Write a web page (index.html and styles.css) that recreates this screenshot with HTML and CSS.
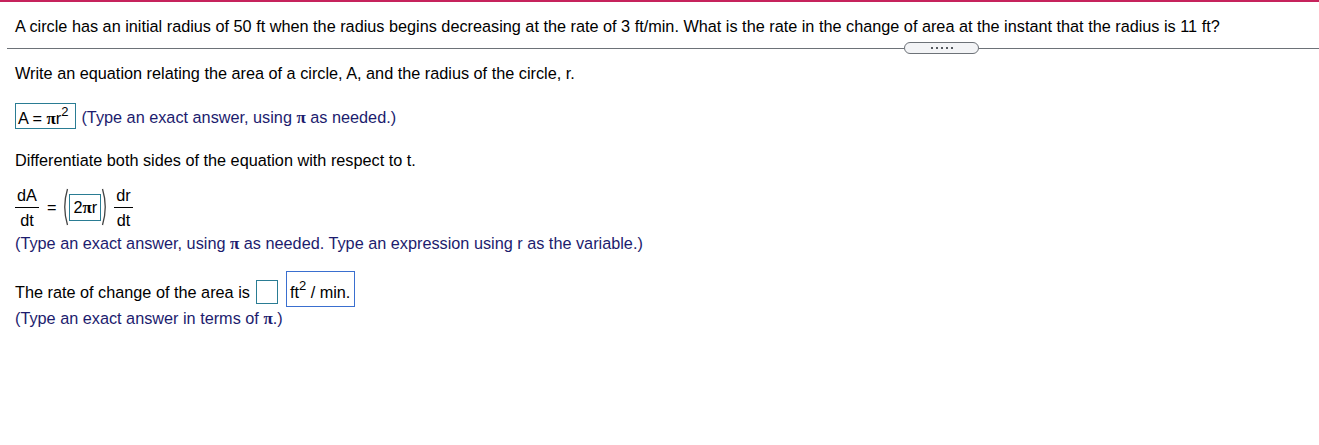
FILE: index.html
```html
<!DOCTYPE html>
<html>
<head>
<meta charset="utf-8">
<link rel="stylesheet" href="styles.css">
</head>
<body>
<div class="topbar"></div>
<div class="question">A circle has an initial radius of 50 ft when the radius begins decreasing at the rate of 3 ft/min. What is the rate in the change of area at the instant that the radius is 11 ft?</div>
<div class="sep">
  <div class="line"></div>
  <div class="pill"><span></span><span></span><span></span><span></span><span></span></div>
  <div class="line short"></div>
</div>
<div class="content">
  <p class="step">Write an equation relating the area of a circle, A, and the radius of the circle, r.</p>
  <div class="row">
    <span class="ans">A = <span class="pi">π</span>r<sup>2</sup></span>
    <span class="hint">(Type an exact answer, using <span class="pi">π</span> as needed.)</span>
  </div>
  <p class="step s2">Differentiate both sides of the equation with respect to t.</p>
  <div class="eq">
    <span class="frac"><span class="num">dA</span><span class="den">dt</span></span>
    <span class="eqs">=</span>
    <svg class="paren" width="8" height="38" viewBox="0 0 8 38"><path d="M6.5 1 Q1 19 6.5 37" fill="none" stroke="#444" stroke-width="1.3"/></svg>
    <span class="ans ans2">2<span class="pi">π</span>r</span>
    <svg class="paren" width="8" height="38" viewBox="0 0 8 38"><path d="M1.5 1 Q7 19 1.5 37" fill="none" stroke="#444" stroke-width="1.3"/></svg>
    <span class="frac fr2"><span class="num">dr</span><span class="den">dt</span></span>
  </div>
  <p class="hint h2">(Type an exact answer, using <span class="pi">π</span> as needed. Type an expression using r as the variable.)</p>
  <div class="row3">
    <span class="lbl">The rate of change of the area is</span>
    <span class="empty"></span>
    <span class="unit"><span>ft<sup>2</sup> / min.</span></span>
  </div>
  <p class="hint h3">(Type an exact answer in terms of <span class="pi">π</span>.)</p>
</div>
</body>
</html>
```
FILE: styles.css
```css
html, body {
  margin: 0;
  padding: 0;
  background: #fff;
}
body {
  font-family: "Liberation Sans", Arial, sans-serif;
  font-size: 16.25px;
  color: #000;
  width: 1319px;
  height: 445px;
  overflow: hidden;
}
.topbar {
  height: 2px;
  background: #c6235c;
}
.question {
  padding: 15px 0 0 15px;
  line-height: 18px;
}
.sep {
  display: flex;
  align-items: center;
  margin-left: 7px;
  height: 12px;
  margin-top: 7px;
}
.sep .line {
  height: 1px;
  background: #6d7278;
  width: 897px;
}
.sep .line.short {
  flex: 1;
}
.pill {
  width: 73px;
  height: 10px;
  border: 1px solid #6d7278;
  border-radius: 6px;
  background: #f3f4f6;
  display: flex;
  justify-content: center;
  align-items: center;
  gap: 3px;
}
.pill span {
  width: 2px;
  height: 2px;
  background: #555a60;
}
.content {
  padding-left: 15px;
}
.step {
  margin: 10px 0 0;
  line-height: 18px;
}
.row {
  display: flex;
  align-items: center;
  margin-top: 21px;
  height: 26px;
}
.ans {
  border: 1px solid #2a7c93;
  padding: 0 4px 0 2px;
  display: inline-block;
  line-height: 18px;
}
.row .ans {
  height: 24px;
  line-height: 28px;
  padding-right: 7px;
}
.ans sup, .unit sup {
  font-size: 13px;
  line-height: 0;
  vertical-align: 8px;
}
.pi {
  font-family: "Liberation Serif", "Times New Roman", serif;
  font-size: 17px;
  font-weight: bold;
}
.hint {
  color: #1c1c6e;
}
.row .hint {
  margin-left: 5px;
  padding-top: 4px;
}
.s2 {
  margin-top: 22px;
}
.eq {
  display: flex;
  align-items: center;
  margin-top: 16px;
  height: 44px;
}
.frac {
  display: inline-flex;
  flex-direction: column;
  align-items: center;
  line-height: 18px;
}
.frac .num {
  border-bottom: 1px solid #000;
  padding: 0 2px 3px;
}
.frac .den {
  padding-top: 3px;
}
.eqs {
  margin: 0 5px 0 8px;
}
.paren {
  display: block;
}
.ans2 {
  padding: 3px 3px 3px 3px;
  margin: 0;
}
.fr2 {
  margin-left: 5px;
}
.h2 {
  margin: 5px 0 0;
  line-height: 18px;
}
.row3 {
  display: flex;
  align-items: center;
  margin-top: 18px;
  height: 36px;
}
.lbl {
  padding-top: 7px;
}
.empty {
  width: 20px;
  height: 22px;
  border: 1px solid #2a7c93;
  margin-left: 6px;
  margin-top: 6px;
}
.unit {
  border: 1px solid #3a6fcf;
  margin-left: 8px;
  padding: 0 4px 0 3px;
  height: 34px;
  display: flex;
  align-items: center;
}
.unit > span {
  padding-top: 7px;
}
.h3 {
  margin: 2px 0 0;
  line-height: 18px;
}
```
